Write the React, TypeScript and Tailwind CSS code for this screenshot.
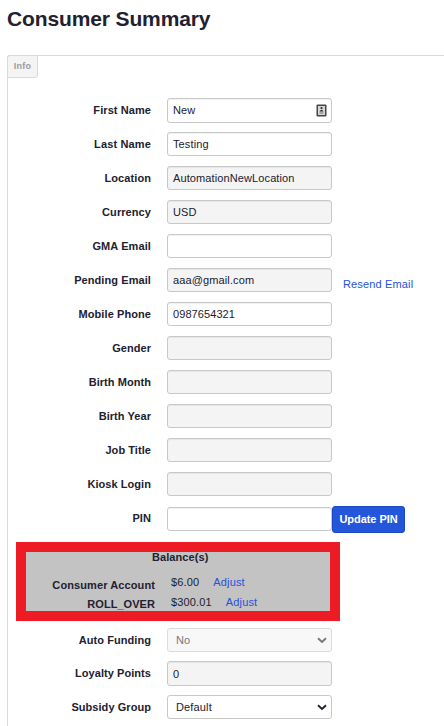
import clsx from "clsx";

interface iField {
  label: string;
  value?: string;
  disabled?: boolean;
  autofill?: boolean;
  link?: string;
  labelClass?: string;
  valueClass?: string;
}

const fields: iField[] = [
  { label: "First Name", value: "New", autofill: true, labelClass: "tracking-[0.08px]" },
  { label: "Last Name", value: "Testing", labelClass: "tracking-[0.15px]" },
  {
    label: "Location",
    value: "AutomationNewLocation",
    disabled: true,
    labelClass: "tracking-[0.08px]",
    valueClass: "tracking-[0.11px]",
  },
  { label: "Currency", value: "USD", disabled: true, labelClass: "tracking-[0.08px]" },
  { label: "GMA Email", labelClass: "tracking-[0.1px]" },
  {
    label: "Pending Email",
    value: "aaa@gmail.com",
    disabled: true,
    link: "Resend Email",
    labelClass: "tracking-[0.08px]",
  },
  {
    label: "Mobile Phone",
    value: "0987654321",
    labelClass: "tracking-[0.08px]",
    valueClass: "tracking-[0.08px]",
  },
  { label: "Gender", disabled: true },
  { label: "Birth Month", disabled: true },
  { label: "Birth Year", disabled: true },
  { label: "Job Title", disabled: true },
  { label: "Kiosk Login", disabled: true },
];

const balances = [
  { label: "Consumer Account", amount: "$6.00" },
  { label: "ROLL_OVER", amount: "$300.01" },
];

function Label({ children, className }: { children: string; className?: string }) {
  return (
    <label
      className={clsx(
        "mr-4 w-[143px] shrink-0 text-right font-bold leading-6",
        className || "tracking-[0.06px]"
      )}
    >
      {children}
    </label>
  );
}

function AutofillIcon() {
  return (
    <svg width="11" height="13" viewBox="0 0 11 13" className="mr-1">
      <rect x="0.5" y="0.5" width="10" height="12" rx="1" fill="#45454a" />
      <rect x="2" y="2" width="7" height="9" fill="#d6d6d8" />
      <circle cx="5.5" cy="4" r="1.1" fill="#2b2b30" />
      <path d="M3.5 7.5 Q5.5 4.2 7.5 7.5 Z" fill="#2b2b30" />
      <path d="M3.5 9h4" stroke="#77777c" />
    </svg>
  );
}

function Chevron() {
  return (
    <svg width="10" height="7" viewBox="0 0 10 7" className="mr-1" fill="none">
      <path d="M1 1.2 L5 5 L9 1.2" stroke="currentColor" strokeWidth="1.9" />
    </svg>
  );
}

function Box(props: iField & { className?: string }) {
  return (
    <div
      className={clsx(
        "flex w-[165px] shrink-0 justify-between rounded-[3px] border border-[#c8c8c8] pl-[5px] shadow-[inset_0_1px_1px_rgba(0,0,0,0.06)]",
        props.autofill ? "h-[25px] items-start" : "h-6 items-center",
        props.disabled ? "bg-[#f4f4f4]" : "bg-white",
        props.className
      )}
    >
      <span className={clsx("leading-[22px]", props.valueClass || "tracking-[0.12px]")}>
        {props.value}
      </span>
      {props.autofill && (
        <span className="mt-[5px]">
          <AutofillIcon />
        </span>
      )}
    </div>
  );
}

function Select({ value, disabled }: { value: string; disabled?: boolean }) {
  return (
    <div
      className={clsx(
        "flex h-6 w-[165px] items-center justify-between rounded-[3px] border pl-2",
        disabled
          ? "border-[#dcdcdc] bg-[#f8f8f8] text-[#77777d]"
          : "border-[#c8c8c8] bg-white"
      )}
    >
      <span className="leading-[22px] tracking-[0.15px]">{value}</span>
      <Chevron />
    </div>
  );
}

export default function App() {
  return (
    <div className="h-[726px] w-[444px] overflow-hidden bg-white pl-[7px] font-['Liberation_Sans',Arial,sans-serif] text-[11px] text-[#212130]">
      <h1 className="text-[21px] font-bold leading-[38px] tracking-[-0.13px]">
        Consumer Summary
      </h1>

      <div className="mt-[17px] h-[700px] w-[500px] rounded-tl-[3px] border-l border-t border-[#dadada]">
        <div className="-ml-px -mt-px flex h-[23px] w-[31px] items-center justify-center rounded-br-[3px] rounded-tl-[3px] border border-[#dadada] bg-[#f4f4f4] text-[9px] font-bold tracking-[0.2px] text-[#9a9a9e]">
          Info
        </div>

        <div className="mt-5">
          {fields.map((field) => (
            <div key={field.label} className="flex h-[34px] items-start">
              <Label className={field.labelClass}>{field.label}</Label>
              <Box {...field} />
              {field.link && (
                <a className="ml-[11px] mt-1 leading-6 tracking-[0.15px] text-[#2451dc]">
                  {field.link}
                </a>
              )}
            </div>
          ))}

          <div className="flex h-9 items-start">
            <Label>PIN</Label>
            <Box label="PIN" className="mt-px" />
            <button className="h-[27px] w-[73px] shrink-0 rounded-[3px] border border-[#1c48c4] bg-[#2456dc] font-bold leading-[25px] tracking-[-0.05px] text-white">
              Update PIN
            </button>
          </div>

          <div className="ml-2 h-[79px] w-[324px] border-10 border-[#ed1c24] bg-[#c3c3c3]">
            <div className="ml-[126px] h-5 font-bold leading-[10px] tracking-[0.08px]">
              Balance(s)
            </div>
            {balances.map(({ label, amount }, i) => (
              <div key={label} className={clsx("flex", i === 0 ? "h-5" : "h-[19px]")}>
                <span
                  className={clsx(
                    "mr-4 w-[129px] shrink-0 text-right font-bold",
                    i === 0
                      ? "leading-[26px] tracking-[0.1px]"
                      : "leading-6 tracking-[0.05px]"
                  )}
                >
                  {label}
                </span>
                <span className="leading-5 tracking-[0.15px]">{amount}</span>
                <a className="ml-3.5 leading-5 tracking-[0.15px] text-[#2451dc]">Adjust</a>
              </div>
            ))}
          </div>

          <div className="mt-[7px] flex h-[33px] items-start">
            <Label>Auto Funding</Label>
            <Select value="No" disabled />
          </div>
          <div className="flex h-[34px] items-start">
            <Label>Loyalty Points</Label>
            <Box label="Loyalty Points" value="0" disabled className="h-[25px]" />
          </div>
          <div className="flex items-start">
            <Label>Subsidy Group</Label>
            <Select value="Default" />
          </div>
        </div>
      </div>
    </div>
  );
}
